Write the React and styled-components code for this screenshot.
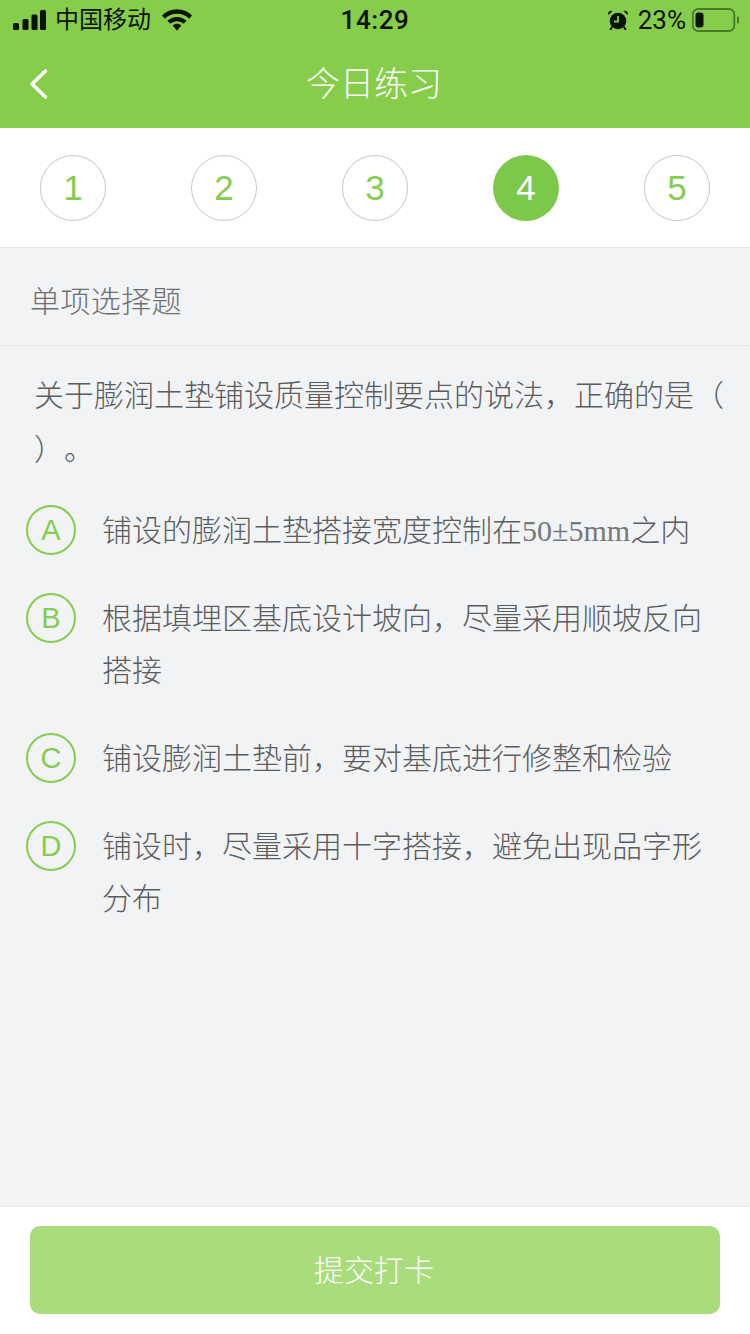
import React from "react";
import styled, { createGlobalStyle } from "styled-components";

const CJK = '"Liberation Sans", "Noto Sans CJK SC", sans-serif';
const LIGHT = 'Roboto, "Liberation Sans", sans-serif';
const ARIAL = '"Liberation Sans", sans-serif';

const Global = createGlobalStyle`
  html, body { margin: 0; padding: 0; background: #f2f3f5; }
  * { box-sizing: border-box; }
  body { font-family: ${CJK}; text-spacing-trim: space-all; }
`;

const Page = styled.div`
  width: 750px;
  height: 1334px;
  display: flex;
  flex-direction: column;
  overflow: hidden;
`;
const Header = styled.header`
  height: 128px;
  background: #86cd4b;
  display: flex;
  flex-direction: column;
`;
const StatusBar = styled.div`
  height: 40px;
  display: grid;
  grid-template-columns: 1fr auto 1fr;
  align-items: center;
  color: #0b1206;
`;
const StatusLeft = styled.div`
  display: flex;
  align-items: center;
  padding-left: 13px;
`;
const Carrier = styled.span`
  font-size: 24px;
  font-weight: 400;
  margin-left: 9px;
  margin-right: 11px;
  line-height: 40px;
`;
const Time = styled.span`
  font-size: 26px;
  font-weight: 500;
  font-family: ${LIGHT};
  letter-spacing: 0.6px;
`;
const StatusRight = styled.div`
  display: flex;
  align-items: center;
  justify-content: flex-end;
  padding-right: 11px;
`;
const Percent = styled.span`
  font-family: ${LIGHT};
  font-size: 26px;
  font-weight: 400;
  margin-left: 10px;
  margin-right: 6px;
`;
const NavBar = styled.div`
  flex: 1;
  display: flex;
  align-items: center;
  justify-content: center;
  position: relative;
`;
const BackIcon = styled.svg`
  position: absolute;
  left: 28px;
  top: 28px;
`;
const Title = styled.h1`
  margin: 0 2px 0 0;
  font-size: 34px;
  font-weight: 300;
  color: #fff;
  line-height: 88px;
  height: 88px;
`;
const Steps = styled.nav`
  height: 120px;
  background: #fff;
  border-bottom: 1px solid #e6e7e9;
  padding: 27px 40px 0;
  display: flex;
  justify-content: space-between;
  align-items: flex-start;
`;
const Step = styled.div`
  width: 66px;
  height: 66px;
  border-radius: 50%;
  border: ${(p) => (p.$active ? "none" : "1px solid #c6c6c6")};
  background: ${(p) => (p.$active ? "#7cc84a" : "#fff")};
  color: ${(p) => (p.$active ? "#fff" : "#85cd4f")};
  display: flex;
  align-items: center;
  justify-content: center;
  font-size: 35px;
  font-family: ${ARIAL};
  font-weight: 400;
`;
const Main = styled.main`
  flex: 1;
  background: #f2f3f5;
  display: flex;
  flex-direction: column;
`;
const SectionTitle = styled.div`
  height: 98px;
  border-bottom: 1px solid #e6e7e9;
  padding: 4px 0 0 30px;
  display: flex;
  align-items: center;
  font-size: 30px;
  font-weight: 300;
  letter-spacing: 0.4px;
  color: #6f7072;
`;
const Question = styled.p`
  margin: 23px 0 28px;
  padding: 0 20px 0 34px;
  font-size: 30px;
  line-height: 54px;
  font-weight: 300;
  color: #5c5d5f;
`;
const Options = styled.div`
  display: flex;
  flex-direction: column;
  gap: 36px;
  padding: 0 26px;
`;
const Option = styled.div`
  display: flex;
  align-items: flex-start;
  gap: 26px;
`;
const Badge = styled.div`
  flex: none;
  width: 50px;
  height: 50px;
  border-radius: 50%;
  border: 2px solid #85cd4f;
  color: #85cd4f;
  display: flex;
  align-items: center;
  justify-content: center;
  padding-top: 1px;
  font-size: 29px;
  font-weight: 400;
  font-family: ${ARIAL};
`;
const OptionText = styled.div`
  font-size: 30px;
  line-height: 52px;
  font-weight: 300;
  color: #5c5d5f;
`;
const Serif = styled.span`
  font-family: "Liberation Serif", serif;
  font-size: 30px;
  color: #77787a;
`;
const Footer = styled.footer`
  height: 128px;
  background: #fff;
  border-top: 1px solid #e8e9eb;
  padding: 19px 30px 0;
`;
const Submit = styled.button`
  width: 690px;
  height: 88px;
  border: none;
  border-radius: 10px;
  background: #a9dc7a;
  color: #fff;
  font-family: ${CJK};
  font-size: 30px;
  font-weight: 300;
  padding: 0 2px 4px 0;
`;

const Signal = () => (
  <svg width="33" height="20" viewBox="0 0 33 20" fill="#0b1206">
    <rect x="0" y="13" width="6" height="7" rx="1.500" />
    <rect x="9.500" y="9" width="6" height="11" rx="1.500" />
    <rect x="18.500" y="4.500" width="6" height="15.500" rx="1.500" />
    <rect x="27" y="0" width="6" height="20" rx="1.500" />
  </svg>
);
const Wifi = () => (
  <svg width="30" height="22" viewBox="0 0 31 22" fill="#0b1206">
    <path d="M15.500 0C9.600 0 4.300 2.300 0 6.400L3 9.600C6.200 6.400 10.600 4.500 15.500 4.500S24.800 6.400 28 9.600L31 6.400C26.700 2.300 21.400 0 15.500 0Z" />
    <path d="M15.500 7.800C11.700 7.800 8.300 9.200 5.600 11.700L8.700 15C10.500 13.300 12.900 12.300 15.500 12.300S20.500 13.300 22.300 15L25.400 11.700C22.700 9.200 19.300 7.800 15.500 7.800Z" />
    <path d="M15.500 15C13.800 15 12.300 15.600 11.100 16.700L15.500 22L19.900 16.700C18.700 15.600 17.200 15 15.500 15Z" />
  </svg>
);
const Alarm = () => (
  <svg width="20" height="20" viewBox="0 0 20 20">
    <circle cx="10" cy="11" r="8.300" fill="#0b1206" />
    <path d="M0.500 5 L4.500 1 A3 3 0 0 0 0.500 5Z M19.500 5 L15.500 1 A3 3 0 0 1 19.500 5Z" fill="#0b1206" />
    <path d="M4 17 L2.500 19.500 M16 17 L17.500 19.500" stroke="#0b1206" strokeWidth="1.800" strokeLinecap="round" />
    <path d="M10 6 V11.500 H6" stroke="#86cd4b" strokeWidth="1.800" fill="none" />
  </svg>
);
const Battery = () => (
  <svg width="47" height="24" viewBox="0 0 47 24">
    <rect x="0.800" y="1" width="41.500" height="22" rx="5.500" fill="none" stroke="#47792a" strokeWidth="1.800" />
    <rect x="3.500" y="4.500" width="8" height="15" rx="3" fill="#0b1206" />
    <rect x="45" y="8.500" width="2" height="7" rx="1" fill="#47792a" />
  </svg>
);

const steps = [1, 2, 3, 4, 5];

export default function App() {
  return (
    <Page>
      <Global />
      <Header>
        <StatusBar>
          <StatusLeft>
            <Signal />
            <Carrier>中国移动</Carrier>
            <Wifi />
          </StatusLeft>
          <Time>14:29</Time>
          <StatusRight>
            <Alarm />
            <Percent>23%</Percent>
            <Battery />
          </StatusRight>
        </StatusBar>
        <NavBar>
          <BackIcon width="22" height="32" viewBox="0 0 22 32" fill="none">
            <path d="M17.500 3 L4 16 L17.500 29" stroke="#fff" strokeWidth="3.600" strokeLinecap="round" strokeLinejoin="round" />
          </BackIcon>
          <Title>今日练习</Title>
        </NavBar>
      </Header>
      <Steps>
        {steps.map((n) => (
          <Step key={n} $active={n === 4}>{n}</Step>
        ))}
      </Steps>
      <Main>
        <SectionTitle>单项选择题</SectionTitle>
        <Question>关于膨润土垫铺设质量控制要点的说法，正确的是（ ）。</Question>
        <Options>
          <Option>
            <Badge>A</Badge>
            <OptionText>铺设的膨润土垫搭接宽度控制在<Serif>50±5mm</Serif>之内</OptionText>
          </Option>
          <Option>
            <Badge>B</Badge>
            <OptionText>根据填埋区基底设计坡向，尽量采用顺坡反向搭接</OptionText>
          </Option>
          <Option>
            <Badge>C</Badge>
            <OptionText>铺设膨润土垫前，要对基底进行修整和检验</OptionText>
          </Option>
          <Option>
            <Badge>D</Badge>
            <OptionText>铺设时，尽量采用十字搭接，避免出现品字形分布</OptionText>
          </Option>
        </Options>
      </Main>
      <Footer>
        <Submit>提交打卡</Submit>
      </Footer>
    </Page>
  );
}
